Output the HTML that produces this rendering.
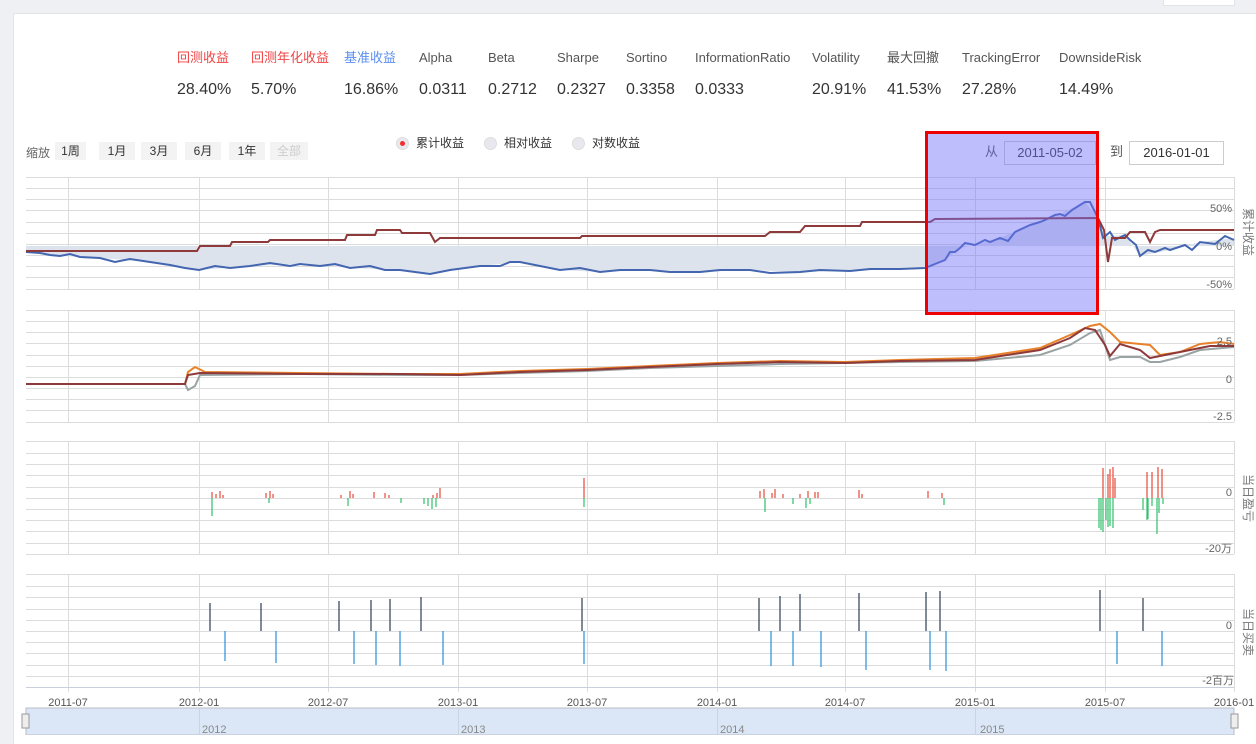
<!DOCTYPE html>
<html><head><meta charset="utf-8"><style>
body{margin:0;width:1256px;height:735px;background:#eef0f3;overflow:hidden;font-family:"Liberation Sans","Noto Sans CJK SC",sans-serif;position:relative}
.panel{position:absolute;left:13px;top:13px;width:1250px;height:730px;background:#fff;border-top:1px solid #e2e4e8;border-left:1px solid #e2e4e8}
.m{position:absolute;font-size:13px;color:#555;top:50px;line-height:16px;height:16px}
.v{position:absolute;font-size:16px;color:#333;top:80px;line-height:20px}
.btn{position:absolute;top:142px;height:18px;line-height:18px;font-size:12px;color:#333;background:#f3f3f3;text-align:center}
.t{position:absolute;font-size:12px;color:#333;line-height:16px}
.inp{position:absolute;top:141px;height:22px;border:1px solid #ccc;font-size:13px;line-height:22px;text-align:center;color:#333;background:#fff}
</style></head><body>
<div class="panel"></div>
<div style="position:absolute;left:1163px;top:0;width:70px;height:5px;background:#fff;border:1px solid #e2e4e8;border-top:none"></div>
<div class="m" style="left:177px;color:#f04545">回测收益</div>
<div class="m" style="left:251px;color:#f04545">回测年化收益</div>
<div class="m" style="left:344px;color:#5b8ff0">基准收益</div>
<div class="m" style="left:419px">Alpha</div>
<div class="m" style="left:488px">Beta</div>
<div class="m" style="left:557px">Sharpe</div>
<div class="m" style="left:626px">Sortino</div>
<div class="m" style="left:695px">InformationRatio</div>
<div class="m" style="left:812px">Volatility</div>
<div class="m" style="left:887px">最大回撤</div>
<div class="m" style="left:962px">TrackingError</div>
<div class="m" style="left:1059px">DownsideRisk</div>
<div class="v" style="left:177px">28.40%</div>
<div class="v" style="left:251px">5.70%</div>
<div class="v" style="left:344px">16.86%</div>
<div class="v" style="left:419px">0.0311</div>
<div class="v" style="left:488px">0.2712</div>
<div class="v" style="left:557px">0.2327</div>
<div class="v" style="left:626px">0.3358</div>
<div class="v" style="left:695px">0.0333</div>
<div class="v" style="left:812px">20.91%</div>
<div class="v" style="left:887px">41.53%</div>
<div class="v" style="left:962px">27.28%</div>
<div class="v" style="left:1059px">14.49%</div>
<div class="t" style="left:26px;top:145px;color:#666">缩放</div>
<div class="btn" style="left:55px;width:31px">1周</div>
<div class="btn" style="left:99px;width:36px">1月</div>
<div class="btn" style="left:141px;width:36px">3月</div>
<div class="btn" style="left:185px;width:36px">6月</div>
<div class="btn" style="left:229px;width:36px">1年</div>
<div class="btn" style="left:270px;width:38px;color:#ccc">全部</div>
<div style="position:absolute;left:396px;top:137px;width:11px;height:11px;border-radius:50%;background:#e8e8ee;border:1px solid #ddd"><div style="margin:3px;width:5px;height:5px;border-radius:50%;background:#f03030"></div></div>
<div class="t" style="left:416px;top:135px">累计收益</div>
<div style="position:absolute;left:484px;top:137px;width:11px;height:11px;border-radius:50%;background:#e8e8ee;border:1px solid #ddd"></div>
<div class="t" style="left:504px;top:135px">相对收益</div>
<div style="position:absolute;left:572px;top:137px;width:11px;height:11px;border-radius:50%;background:#e8e8ee;border:1px solid #ddd"></div>
<div class="t" style="left:592px;top:135px">对数收益</div>
<div class="t" style="left:985px;top:144px;font-size:13px;color:#555">从</div>
<div class="inp" style="left:1004px;width:90px">2011-05-02</div>
<div class="t" style="left:1110px;top:144px;font-size:13px;color:#555">到</div>
<div class="inp" style="left:1129px;width:93px">2016-01-01</div>

<svg width="1256" height="735" style="position:absolute;left:0;top:0" font-family="Liberation Sans, Noto Sans CJK SC, sans-serif">
<g stroke="#dcdcdc" stroke-width="1" fill="none">
<path d="M26 177.5H1234M26 188.5H1234M26 199.5H1234M26 210.5H1234M26 222.5H1234M26 233.5H1234M26 244.5H1234M26 255.5H1234M26 266.5H1234M26 277.5H1234M26 289.5H1234"/>
<path d="M26 310.5H1234M26 321.5H1234M26 332.5H1234M26 343.5H1234M26 355.5H1234M26 366.5H1234M26 377.5H1234M26 388.5H1234M26 399.5H1234M26 410.5H1234M26 422.5H1234"/>
<path d="M26 441.5H1234M26 453.5H1234M26 464.5H1234M26 475.5H1234M26 487.5H1234M26 498.5H1234M26 509.5H1234M26 520.5H1234M26 531.5H1234M26 543.5H1234M26 554.5H1234"/>
<path d="M26 574.5H1234M26 586.5H1234M26 597.5H1234M26 609.5H1234M26 620.5H1234M26 631.5H1234M26 642.5H1234M26 653.5H1234M26 665.5H1234M26 676.5H1234M26 687.5H1234"/>
<path d="M68.5 177V289M199.5 177V289M328.5 177V289M458.5 177V289M587.5 177V289M717.5 177V289M845.5 177V289M975.5 177V289M1105.5 177V289M1234.5 177V289"/>
<path d="M68.5 310V422M199.5 310V422M328.5 310V422M458.5 310V422M587.5 310V422M717.5 310V422M845.5 310V422M975.5 310V422M1105.5 310V422M1234.5 310V422"/>
<path d="M68.5 441V554M199.5 441V554M328.5 441V554M458.5 441V554M587.5 441V554M717.5 441V554M845.5 441V554M975.5 441V554M1105.5 441V554M1234.5 441V554"/>
<path d="M68.5 574V692M199.5 574V692M328.5 574V692M458.5 574V692M587.5 574V692M717.5 574V692M845.5 574V692M975.5 574V692M1105.5 574V692M1234.5 574V692"/>
</g>
<path d="M26 687.5H1234" stroke="#c8d0dc"/>
<path d="M26 246 L26 252 L60 256 L100 258 L150 262 L199 270 L250 266 L300 264 L350 268 L400 270 L430 274 L480 266 L520 262 L560 270 L600 272 L650 270 L700 272 L750 270 L800 272 L850 271 L900 269 L925 268 L945 260 L960 248 L975 245 L1000 238 L1030 225 L1060 214 L1085 202 L1098 218 L1105 236 L1125 235 L1140 256 L1170 250 L1200 242 L1234 238 L1234 246Z" fill="#dde3ec"/>
<polyline fill="none" stroke="#4466b0" stroke-width="2" points="26,252 40,253 50,255 60,256 70,254 80,257 100,258 115,262 130,259 150,262 170,265 185,268 199,270 215,266 230,268 250,266 270,263 290,266 300,264 320,266 335,264 350,268 370,266 385,270 400,270 415,272 430,274 450,270 465,268 480,266 500,266 510,262 520,262 540,266 560,270 580,268 600,272 620,270 650,270 670,272 700,272 720,270 750,270 770,273 800,272 820,270 850,271 870,269 900,269 925,268 935,264 945,260 950,252 955,252 960,248 965,243 975,245 985,240 990,242 1000,238 1008,241 1015,232 1030,225 1040,222 1045,220 1055,215 1060,214 1065,216 1072,210 1080,205 1085,202 1090,202 1094,210 1098,218 1103,238 1110,232 1115,240 1125,235 1130,240 1136,245 1140,256 1148,250 1155,252 1165,248 1170,250 1185,245 1192,250 1200,242 1215,244 1225,236 1234,240"/>
<polyline fill="none" stroke="#8e3a3a" stroke-width="2" points="26,251 197,251 200,246 230,246 232,242 268,242 270,240 345,240 347,235 375,235 377,230 400,230 402,233 430,233 435,242 440,238 580,238 582,236 765,236 770,232 800,232 805,226 860,226 862,222 930,222 935,219 1098,218 1104,230 1108,262 1112,238 1125,238 1130,232 1145,232 1150,242 1155,232 1160,230 1234,230"/>
<text x="1232" y="212" font-size="11" fill="#666" text-anchor="end">50%</text>
<text x="1232" y="250" font-size="11" fill="#666" text-anchor="end">0%</text>
<text x="1232" y="288" font-size="11" fill="#666" text-anchor="end">-50%</text>
<text font-size="12" fill="#777" transform="translate(1244,208) rotate(90)">累计收益</text>
<polyline fill="none" stroke="#9aa3a3" stroke-width="2" points="26,384 185,384 188,390 195,386 200,375 300,374 400,375 460,375 520,373 587,371 650,368 717,366 780,364 845,363 900,362 975,361 1040,355 1070,345 1090,333 1100,330 1110,360 1120,357 1140,357 1150,362 1160,362 1180,357 1200,350 1234,347"/>
<polyline fill="none" stroke="#e8812a" stroke-width="2" points="26,384 185,384 188,372 195,367 205,372 300,373 400,374 460,374 520,371 587,369 650,366 717,363 780,361 845,362 900,360 975,358 1040,348 1070,335 1090,326 1100,324 1110,332 1120,342 1150,345 1160,355 1180,352 1200,344 1220,342 1234,344"/>
<polyline fill="none" stroke="#8e3a3a" stroke-width="2" points="26,384 185,384 188,375 200,373 300,374 400,374 460,375 520,372 587,370 650,367 717,364 780,362 845,363 900,361 975,360 1040,350 1070,338 1085,328 1095,330 1105,345 1110,356 1120,344 1140,350 1150,358 1170,354 1190,350 1210,346 1234,346"/>
<text x="1232" y="345" font-size="11" fill="#666" text-anchor="end">2.5</text>
<text x="1232" y="383" font-size="11" fill="#666" text-anchor="end">0</text>
<text x="1232" y="420" font-size="11" fill="#666" text-anchor="end">-2.5</text>
<g stroke="#e64a3a" stroke-width="1.2">
<path d="M212 498V492M216 498V494M220 498V491M223 498V495M266 498V493M270 498V491M273 498V494M341 498V495M350 498V491M353 498V494M374 498V492M385 498V493M389 498V495M433 498V495M437 498V493M440 498V488M584 498V478M760 498V491M764 498V489M772 498V493M775 498V489M783 498V494M800 498V494M808 498V491M815 498V492M818 498V492M859 498V490M862 498V494M928 498V491M942 498V493M1103 498V468M1108 498V474M1110 498V469M1113 498V467M1115 498V478M1147 498V472M1152 498V472M1158 498V467M1162 498V469"/>
</g>
<g stroke="#2ec26a" stroke-width="1.2">
<path d="M212 498V516M269 498V503M348 498V506M401 498V503M424 498V504M428 498V506M432 498V509M436 498V507M584 498V507M765 498V512M793 498V504M806 498V508M810 498V504M944 498V505M1099 498V528M1101 498V530M1103 498V532M1106 498V520M1108 498V527M1110 498V526M1113 498V528M1143 498V510M1147 498V520M1148 498V519M1152 498V506M1157 498V534M1159 498V513M1163 498V504"/>
</g>
<text x="1232" y="496" font-size="11" fill="#666" text-anchor="end">0</text>
<text x="1232" y="552" font-size="11" fill="#666" text-anchor="end">-20万</text>
<text font-size="12" fill="#777" transform="translate(1244,474) rotate(90)">当日盈亏</text>
<g stroke="#2c3e55" stroke-width="1.2">
<path d="M210 631V603M261 631V603M339 631V601M371 631V600M390 631V599M421 631V597M582 631V598M759 631V598M780 631V596M800 631V594M859 631V593M926 631V592M940 631V591M1100 631V590M1143 631V598"/>
</g>
<g stroke="#2a8fdc" stroke-width="1.2">
<path d="M225 631V661M276 631V663M354 631V664M376 631V665M400 631V666M443 631V665M584 631V664M771 631V666M793 631V666M821 631V667M866 631V670M930 631V670M946 631V671M1117 631V664M1162 631V666"/>
</g>
<text x="1232" y="629" font-size="11" fill="#666" text-anchor="end">0</text>
<text x="1234" y="684" font-size="11" fill="#666" text-anchor="end">-2百万</text>
<text font-size="12" fill="#777" transform="translate(1244,608) rotate(90)">当日买卖</text>
<g font-size="11" fill="#555" text-anchor="middle">
<text x="68" y="706">2011-07</text><text x="199" y="706">2012-01</text><text x="328" y="706">2012-07</text><text x="458" y="706">2013-01</text><text x="587" y="706">2013-07</text><text x="717" y="706">2014-01</text><text x="845" y="706">2014-07</text><text x="975" y="706">2015-01</text><text x="1105" y="706">2015-07</text><text x="1234" y="706">2016-01</text>
</g>
<rect x="26" y="708" width="1208" height="27" fill="#dbe7f6" stroke="#b8bec8"/>
<g stroke="#c8d4e4"><path d="M199.5 709V735M458.5 709V735M717.5 709V735M975.5 709V735"/></g>
<g font-size="11" fill="#888"><text x="202" y="733">2012</text><text x="461" y="733">2013</text><text x="720" y="733">2014</text><text x="980" y="733">2015</text></g>
<rect x="22" y="714" width="7" height="14" fill="#eee" stroke="#999"/>
<rect x="1231" y="714" width="7" height="14" fill="#eee" stroke="#999"/>
<rect x="926.5" y="132.5" width="171" height="181" fill="rgba(110,110,250,0.45)" stroke="#ee0000" stroke-width="3"/>
</svg>
</body></html>
